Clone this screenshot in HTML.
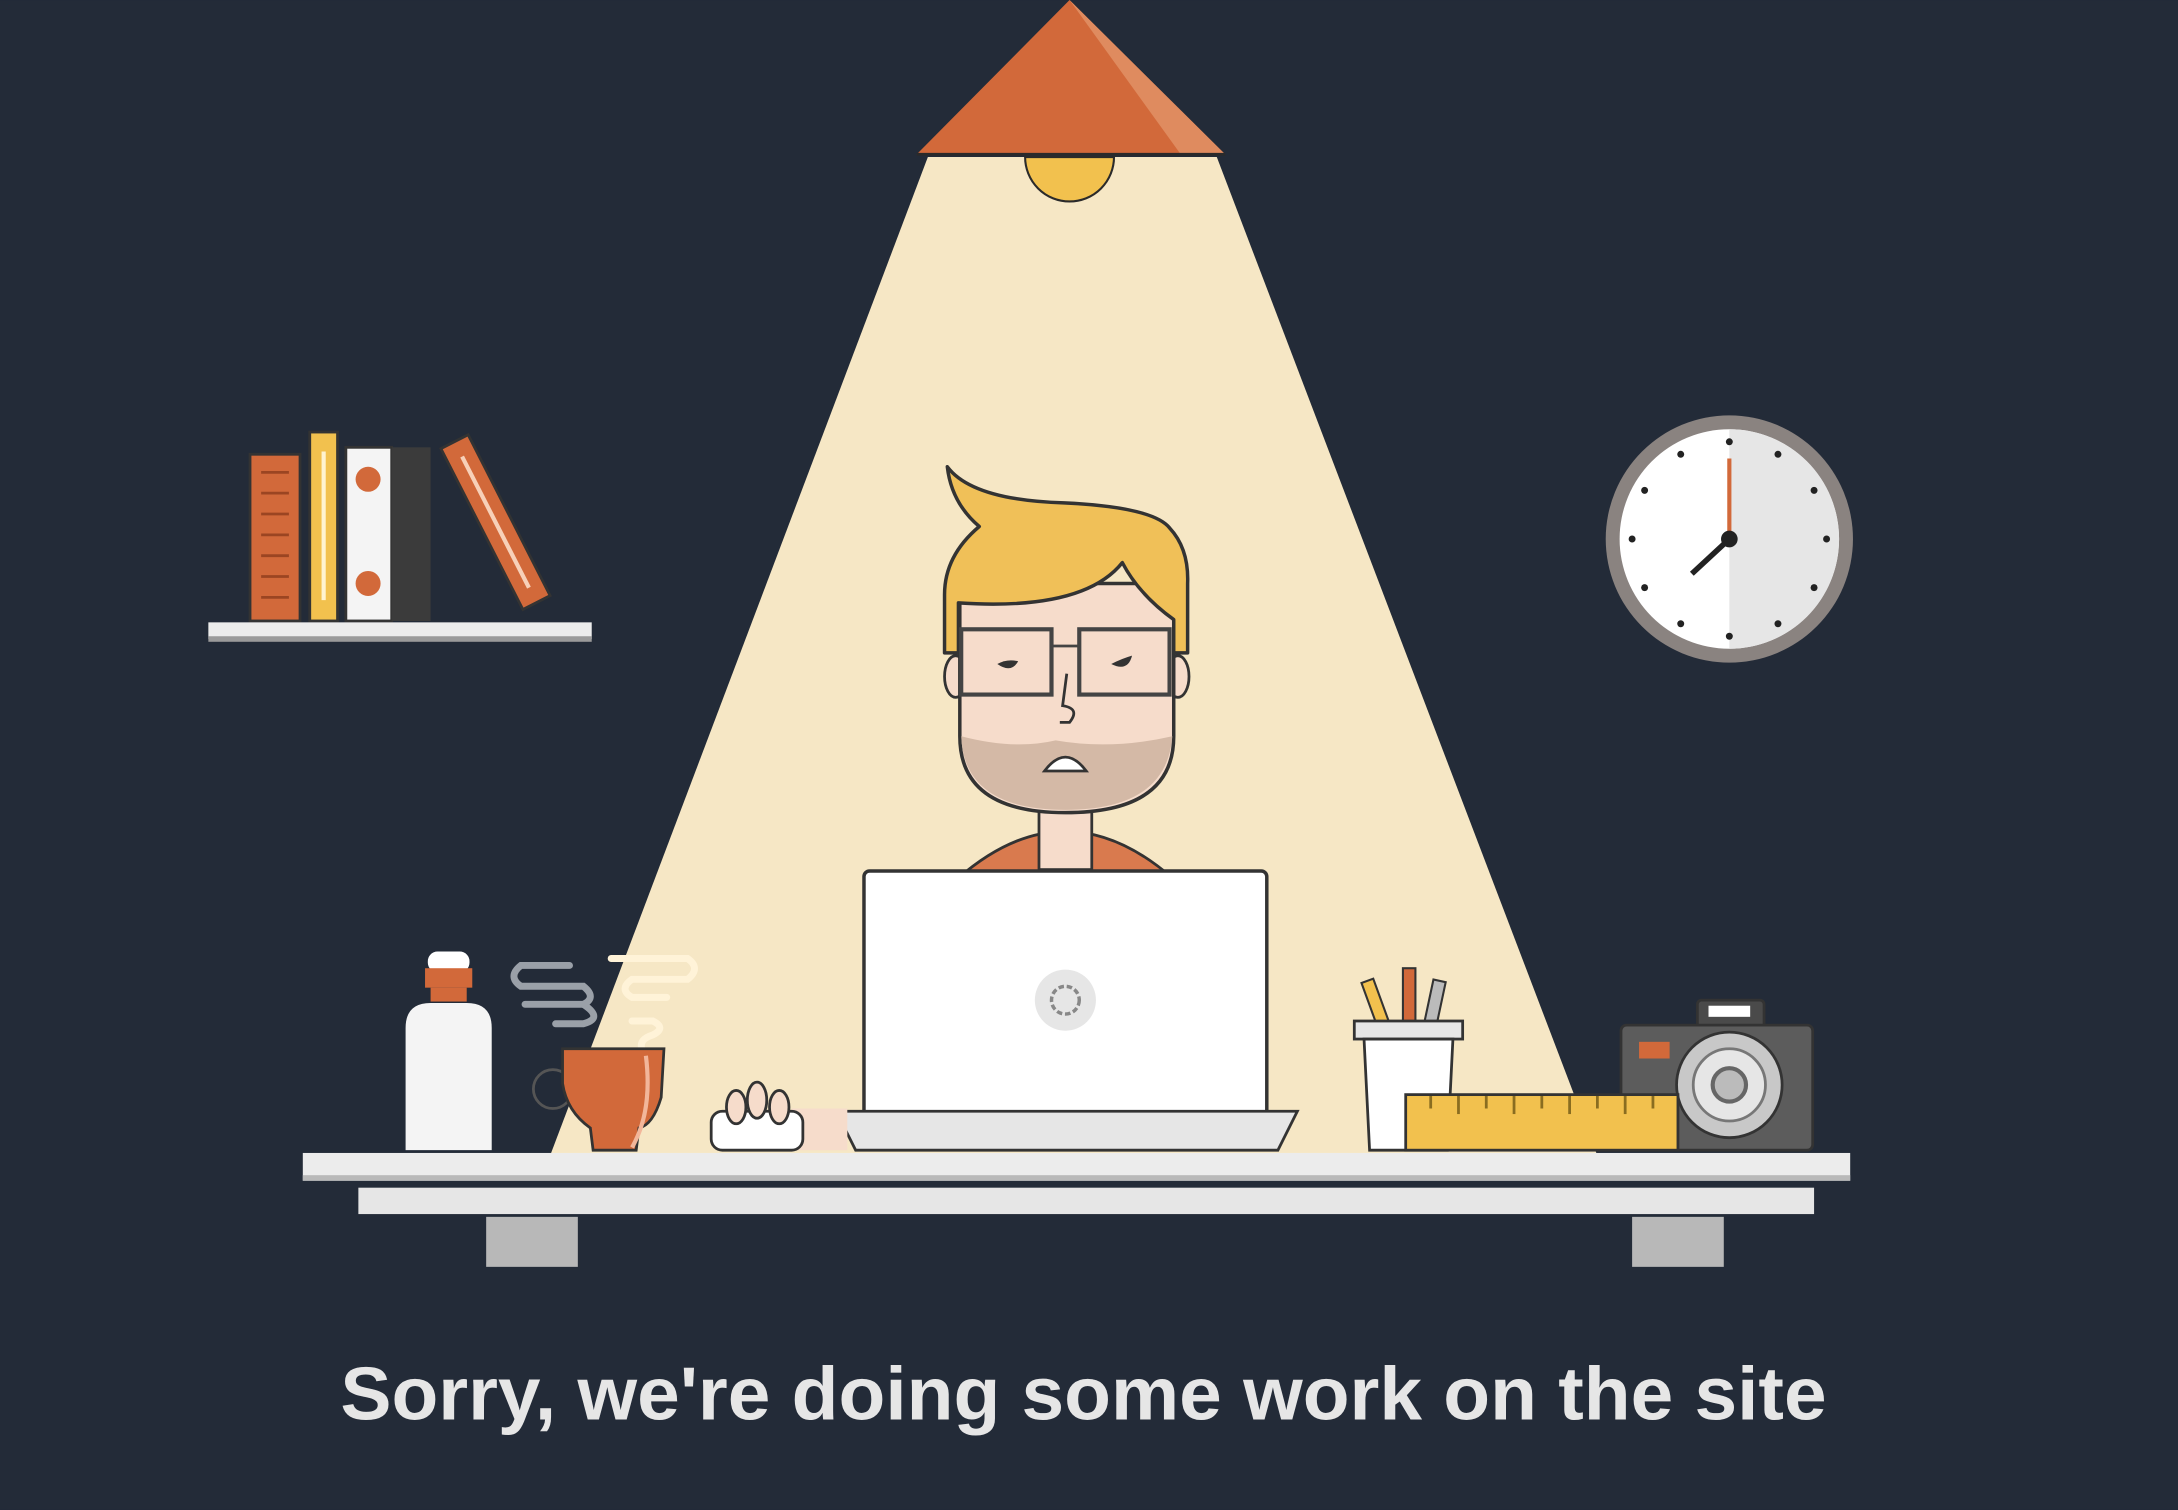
<!DOCTYPE html>
<html><head><meta charset="utf-8"><style>
html,body{margin:0;padding:0;background:#232b38;width:2178px;height:1510px;overflow:hidden}
svg{display:block}
</style></head><body>
<svg width="2178" height="1510" viewBox="0 0 1568 1087" xmlns="http://www.w3.org/2000/svg">
<rect width="1568" height="1087" fill="#232b38"/>
<polygon points="668,113 876,113 1150,832 396,832" fill="#f6e7c5"/>
<path d="M738,113 A32,32 0 0 0 802,113 Z" fill="#f2c14e" stroke="#2a2a2a" stroke-width="1.5"/>
<polygon points="660,111 770,0 882,111" fill="#d2693a"/>
<polygon points="770,0 882,111 850,111" fill="#df8b5f"/>
<line x1="660" y1="111" x2="882" y2="111" stroke="#2a2a2a" stroke-width="2"/>
<rect x="180" y="327" width="36" height="120" fill="#d2693a" stroke="#333" stroke-width="2"/>
<g stroke="#9b4522" stroke-width="2"><line x1="188" y1="340" x2="208" y2="340"/><line x1="188" y1="355" x2="208" y2="355"/><line x1="188" y1="370" x2="208" y2="370"/><line x1="188" y1="385" x2="208" y2="385"/><line x1="188" y1="400" x2="208" y2="400"/><line x1="188" y1="415" x2="208" y2="415"/><line x1="188" y1="430" x2="208" y2="430"/></g>
<rect x="223" y="311" width="20" height="136" fill="#f2c14e" stroke="#333" stroke-width="2"/>
<line x1="233" y1="325" x2="233" y2="432" stroke="#fff3cf" stroke-width="3"/>
<rect x="249" y="322" width="33" height="125" fill="#f4f4f4" stroke="#333" stroke-width="2"/>
<circle cx="265" cy="345" r="9" fill="#d2693a"/><circle cx="265" cy="420" r="9" fill="#d2693a"/>
<rect x="282" y="322" width="28" height="125" fill="#3b3b3b"/>
<g transform="rotate(-27 330 330)"><rect x="322" y="318" width="22" height="130" fill="#d2693a" stroke="#333" stroke-width="2"/><line x1="333" y1="330" x2="333" y2="436" stroke="#f7d0b8" stroke-width="3"/></g>
<rect x="150" y="448" width="276" height="12" fill="#ececec"/>
<rect x="150" y="458" width="276" height="4" fill="#9a9a9a"/>
<circle cx="1245" cy="388" r="89" fill="#8a8380"/>
<circle cx="1245" cy="388" r="79" fill="#ffffff"/>
<path d="M1245,309 A79,79 0 0 1 1245,467 Z" fill="#e6e6e6"/>
<g fill="#222">
<circle cx="1245" cy="318" r="2.5"/><circle cx="1280" cy="327" r="2.5"/><circle cx="1306" cy="353" r="2.5"/><circle cx="1315" cy="388" r="2.5"/><circle cx="1306" cy="423" r="2.5"/><circle cx="1280" cy="449" r="2.5"/><circle cx="1245" cy="458" r="2.5"/><circle cx="1210" cy="449" r="2.5"/><circle cx="1184" cy="423" r="2.5"/><circle cx="1175" cy="388" r="2.5"/><circle cx="1184" cy="353" r="2.5"/><circle cx="1210" cy="327" r="2.5"/>
</g>
<line x1="1245" y1="388" x2="1245" y2="330" stroke="#d2693a" stroke-width="3"/>
<line x1="1245" y1="388" x2="1218" y2="413" stroke="#222" stroke-width="4"/>
<circle cx="1245" cy="388" r="6" fill="#222"/>
<!-- person -->
<path d="M690,632 Q767,565 844,632 Z" fill="#d97a4e" stroke="#333" stroke-width="2"/>
<rect x="748" y="560" width="38" height="66" fill="#f6dccb" stroke="#333" stroke-width="2"/>
<ellipse cx="688" cy="487" rx="8" ry="15" fill="#f6dccb" stroke="#333" stroke-width="2"/>
<ellipse cx="848" cy="487" rx="8" ry="15" fill="#f6dccb" stroke="#333" stroke-width="2"/>
<path d="M691,420 L691,530 Q691,585 767,585 Q845,585 845,530 L845,420 Z" fill="#f6dccb" stroke="#333" stroke-width="2.5"/>
<path d="M692,530 Q730,540 760,533 Q800,540 844,530 Q840,583 767,583 Q694,583 692,530 Z" fill="#d4b9a6"/>
<path d="M752,555 Q767,535 782,555 Z" fill="#fff" stroke="#333" stroke-width="2"/>
<path d="M682,336 Q700,360 766,362 Q830,365 842,380 Q856,395 855,420 L855,470 L845,470 L845,446 Q820,428 808,405 Q780,440 690,434 L690,470 L680,470 L680,428 Q680,400 705,379 Q685,362 682,336 Z" fill="#f0c058" stroke="#333" stroke-width="2.5" stroke-linejoin="round"/>
<rect x="692" y="453" width="65" height="47" fill="none" stroke="#444" stroke-width="3"/>
<rect x="777" y="453" width="65" height="47" fill="none" stroke="#444" stroke-width="3"/>
<line x1="757" y1="465" x2="777" y2="465" stroke="#444" stroke-width="2"/>
<path d="M718,478 Q725,474 733,476 Q728,485 718,478 Z" fill="#333"/>
<path d="M800,478 Q808,474 815,472 Q812,484 800,478 Z" fill="#333"/>
<path d="M768,485 L765,508 Q778,510 770,520 L763,520" fill="none" stroke="#333" stroke-width="2"/>
<!-- laptop -->
<rect x="622" y="627" width="290" height="187" rx="4" fill="#ffffff" stroke="#333" stroke-width="2.5"/>
<circle cx="767" cy="720" r="22" fill="#e6e6e6"/>
<circle cx="767" cy="720" r="10" fill="none" stroke="#888" stroke-width="2.5" stroke-dasharray="4 2"/>
<path d="M602,800 L934,800 L920,828 L616,828 Z" fill="#e6e6e6" stroke="#333" stroke-width="2"/>
<rect x="570" y="798" width="40" height="30" fill="#f6dccb"/>
<rect x="512" y="800" width="66" height="28" rx="8" fill="#fff" stroke="#333" stroke-width="2"/>
<g fill="#f6dccb" stroke="#333" stroke-width="2"><ellipse cx="530" cy="797" rx="7" ry="12"/><ellipse cx="545" cy="792" rx="7" ry="13"/><ellipse cx="561" cy="797" rx="7" ry="12"/></g>
<rect x="308" y="685" width="30" height="15" rx="7" fill="#fff"/>
<rect x="306" y="697" width="34" height="14" fill="#d2693a"/>
<rect x="310" y="711" width="26" height="10" fill="#d2693a"/>
<path d="M292,740 Q292,722 310,722 L336,722 Q354,722 354,740 L354,828 L292,828 Z" fill="#f4f4f4"/>
<g fill="none" stroke="#9aa0a8" stroke-width="5" stroke-linecap="round">
<path d="M410,695 L375,695 Q365,703 375,710 L420,710 Q430,718 420,723 L378,723"/>
<path d="M420,723 Q435,733 420,737 L400,737"/>
</g>
<g fill="none" stroke="#fff3d8" stroke-width="5" stroke-linecap="round">
<path d="M440,690 L495,690 Q505,697 495,705 L455,705 Q445,712 455,718 L480,718"/>
<path d="M455,735 L470,735 Q480,740 470,745 Q460,748 462,755"/>
</g>
<circle cx="398" cy="784" r="14" fill="none" stroke="#555" stroke-width="2"/>
<path d="M405,755 L478,755 L476,790 Q470,810 460,812 L458,828 L427,828 L425,812 Q408,800 405,780 Z" fill="#d2693a" stroke="#333" stroke-width="2"/>
<path d="M465,760 Q470,800 455,826" fill="none" stroke="#f2b69a" stroke-width="3"/>
<g transform="rotate(-20 990 720)"><rect x="985" y="705" width="9" height="35" fill="#f2c14e" stroke="#333" stroke-width="1.5"/></g>
<rect x="1010" y="697" width="9" height="42" fill="#d2693a" stroke="#333" stroke-width="1.5"/>
<g transform="rotate(12 1035 715)"><rect x="1030" y="706" width="9" height="35" fill="#bbb" stroke="#333" stroke-width="1.5"/></g>
<rect x="975" y="735" width="78" height="13" fill="#e6e6e6" stroke="#333" stroke-width="2"/>
<path d="M982,748 L1046,748 L1042,828 L986,828 Z" fill="#fff" stroke="#333" stroke-width="2"/>
<!-- camera -->
<rect x="1222" y="720" width="48" height="20" rx="3" fill="#4a4a4a" stroke="#333" stroke-width="2"/>
<rect x="1230" y="724" width="30" height="8" fill="#fff"/>
<rect x="1167" y="738" width="138" height="90" rx="4" fill="#5c5c5c" stroke="#333" stroke-width="2"/>
<rect x="1180" y="750" width="22" height="12" fill="#d2693a"/>
<circle cx="1245" cy="781" r="38" fill="#c8c8c8" stroke="#333" stroke-width="2"/>
<circle cx="1245" cy="781" r="26" fill="#e6e6e6" stroke="#777" stroke-width="2"/>
<circle cx="1245" cy="781" r="12" fill="#bbb" stroke="#666" stroke-width="3"/>
<!-- ruler in front -->
<rect x="1012" y="788" width="196" height="40" fill="#f2c14e" stroke="#333" stroke-width="2"/>
<g stroke="#8a6d20" stroke-width="2"><line x1="1030" y1="789" x2="1030" y2="798"/><line x1="1050" y1="789" x2="1050" y2="802"/><line x1="1070" y1="789" x2="1070" y2="798"/><line x1="1090" y1="789" x2="1090" y2="802"/><line x1="1110" y1="789" x2="1110" y2="798"/><line x1="1130" y1="789" x2="1130" y2="802"/><line x1="1150" y1="789" x2="1150" y2="798"/><line x1="1170" y1="789" x2="1170" y2="802"/><line x1="1190" y1="789" x2="1190" y2="798"/></g>
<rect x="218" y="830" width="1114" height="20" fill="#ececec"/>
<rect x="218" y="846" width="1114" height="4" fill="#b9b9b9"/>
<rect x="258" y="855" width="1048" height="19" fill="#e6e6e6"/>
<rect x="350" y="876" width="66" height="36" fill="#b8b8b8"/>
<rect x="1175" y="876" width="66" height="36" fill="#b8b8b8"/>
<text x="780" y="1022" text-anchor="middle" font-family="Liberation Sans, Arial, sans-serif" font-weight="bold" font-size="54" fill="#e6e6e6" textLength="1070" lengthAdjust="spacingAndGlyphs">Sorry, we're doing some work on the site</text>
</svg>
</body></html>
